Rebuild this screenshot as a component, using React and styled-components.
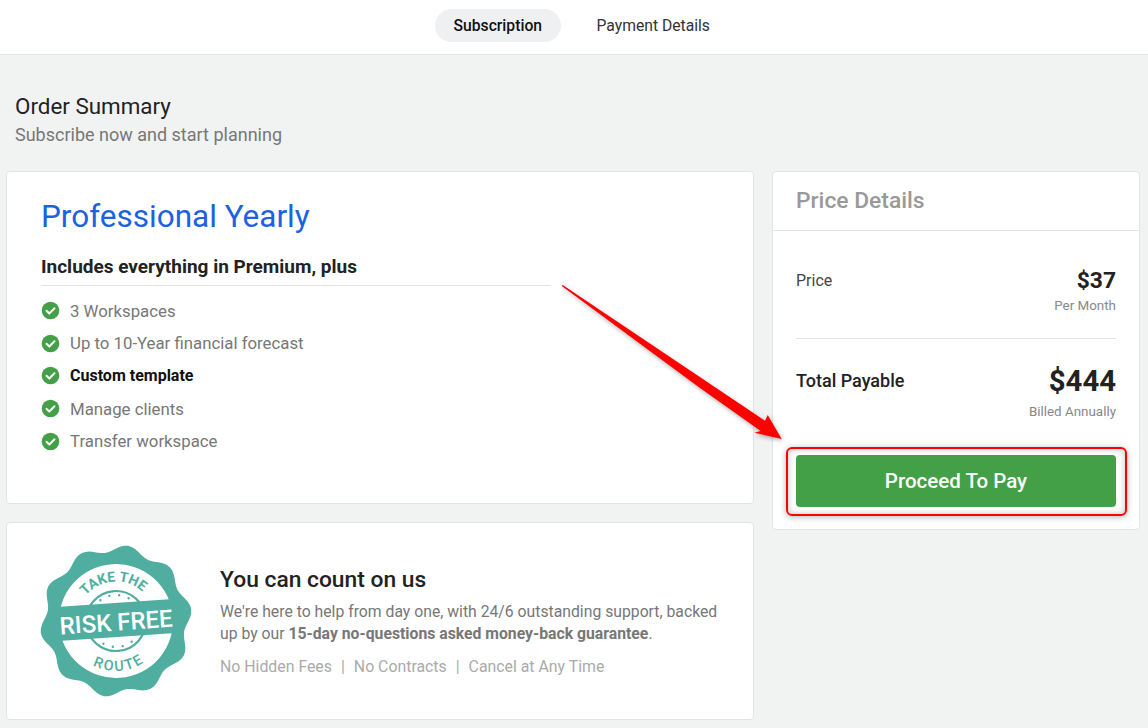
import React from 'react';
import styled, { createGlobalStyle } from 'styled-components';

const GlobalStyle = createGlobalStyle`
  html, body {
    margin: 0;
    padding: 0;
    background: #f1f3f2;
    font-family: Roboto, "Liberation Sans", sans-serif;
  }
  * { box-sizing: border-box; }
`;

const Page = styled.div`
  position: relative;
  width: 1148px;
  height: 728px;
  overflow: hidden;
`;

const TopBar = styled.div`
  height: 55px;
  background: #fff;
  border-bottom: 1px solid #e2e3e3;
  display: flex;
  justify-content: center;
  gap: 10px;
  padding: 9px 0 0 23px;
`;

const Tab = styled.div`
  height: 33px;
  padding: 0 ${({ $active }) => ($active ? '18.5px' : '26px')};
  border-radius: 17px;
  background: ${({ $active }) => ($active ? '#eff0f2' : 'transparent')};
  color: ${({ $active }) => ($active ? '#111' : '#333')};
  font-size: 15.7px;
  font-weight: ${({ $active }) => ($active ? 500 : 400)};
  line-height: 33px;
`;

const Heading = styled.div`
  padding: 37px 0 0 15px;
  height: 116px;
`;

const Title = styled.div`
  font-size: 22.4px;
  line-height: 28px;
  color: #222;
`;

const Subtitle = styled.div`
  margin-top: 1px;
  font-size: 18px;
  line-height: 28px;
  color: #777;
`;

const Columns = styled.div`
  display: flex;
  gap: 18px;
  padding: 0 8px 0 6px;
  align-items: flex-start;
`;

const LeftColumn = styled.div`
  width: 748px;
  display: flex;
  flex-direction: column;
  gap: 18px;
`;

const Card = styled.div`
  background: #fff;
  border: 1px solid #e2e3e3;
  border-radius: 4px;
`;

const PlanCard = styled(Card)`
  height: 333px;
  padding: 25px 34px;
`;

const PlanName = styled.div`
  font-size: 31.5px;
  line-height: 40px;
  color: #1a62e2;
`;

const PlanLead = styled.div`
  width: 510px;
  margin-top: 18px;
  padding-bottom: 7px;
  border-bottom: 1px solid #e2e3e3;
  font-size: 19px;
  line-height: 23px;
  font-weight: 700;
  color: #222;
`;

const Features = styled.ul`
  list-style: none;
  margin: 8.625px 0 0;
  padding: 0;
`;

const Feature = styled.li`
  height: 32.55px;
  display: flex;
  align-items: center;
  gap: 10px;
  color: ${({ $strong }) => ($strong ? '#111' : '#777')};
  font-weight: ${({ $strong }) => ($strong ? 700 : 400)};
  font-size: ${({ $strong }) => ($strong ? '16px' : '16.8px')};
`;

const RiskCard = styled(Card)`
  height: 198px;
  display: flex;
  align-items: center;
  padding: 0 0 0 33px;
  gap: 28px;
`;

const RiskBody = styled.div`
  margin-top: 2px;
`;

const RiskTitle = styled.div`
  font-size: 22.8px;
  line-height: 28px;
  font-weight: 500;
  color: #222;
`;

const RiskText = styled.div`
  margin-top: 7px;
  font-size: 15.75px;
  line-height: 22px;
  color: #777;
  b { font-weight: 700; }
`;

const RiskPerks = styled.div`
  margin-top: 11px;
  display: flex;
  gap: 9px;
  font-size: 15.85px;
  line-height: 22px;
  color: #aaa;
`;

const PriceCard = styled(Card)`
  width: 368px;
  height: 359px;
`;

const PriceHeader = styled.div`
  height: 59px;
  padding-left: 23px;
  border-bottom: 1px solid #e2e3e3;
  font-size: 22.8px;
  font-weight: 500;
  line-height: 58px;
  color: #999;
`;

const PriceBody = styled.div`
  padding: 0 23px;
`;

const PriceRow = styled.div`
  display: flex;
  justify-content: space-between;
  padding-top: ${({ $total }) => ($total ? '23px' : '35px')};
  height: ${({ $total }) => ($total ? '116px' : '108px')};
  border-bottom: ${({ $total }) => ($total ? 'none' : '1px solid #e2e3e3')};
`;

const PriceLabel = styled.div`
  font-size: ${({ $total }) => ($total ? '18px' : '16px')};
  font-weight: ${({ $total }) => ($total ? 500 : 400)};
  color: ${({ $total }) => ($total ? '#222' : '#444')};
  line-height: 22px;
  padding-top: ${({ $total }) => ($total ? '8px' : '4px')};
`;

const PriceValue = styled.div`
  text-align: right;
`;

const Amount = styled.div`
  font-size: ${({ $total }) => ($total ? '29.3px' : '22.8px')};
  line-height: ${({ $total }) => ($total ? '38px' : '30px')};
  font-weight: 700;
  color: #222;
`;

const Note = styled.div`
  margin-top: ${({ $total }) => ($total ? '2.5px' : '0.5px')};
  font-size: 13.4px;
  line-height: 18px;
  color: #888;
`;

const PayButton = styled.div`
  height: 52px;
  background: #43a047;
  border-radius: 4px;
  color: #fff;
  font-size: 20.5px;
  font-weight: 500;
  line-height: 52px;
  text-align: center;
`;

const PayHighlight = styled.div`
  position: absolute;
  left: 786px;
  top: 447px;
  width: 341px;
  height: 69px;
  border: 2px solid #f00;
  border-radius: 6px;
  box-shadow: 0 1px 6px rgba(0, 0, 0, 0.3), inset 0 0 6px rgba(0, 0, 0, 0.25);
  pointer-events: none;
`;

const ArrowOverlay = styled.svg`
  position: absolute;
  left: 550px;
  top: 275px;
  filter: drop-shadow(1px 2px 2px rgba(0, 0, 0, 0.3));
`;

const Check = () => (
  <svg width="19" height="19" viewBox="0 0 19 19">
    <circle cx="9.5" cy="9.5" r="8.8" fill="#43a047" />
    <path d="M5.5 9.8l2.8 2.7 5.2-5.2" fill="none" stroke="#fff" strokeWidth="2" strokeLinecap="round" strokeLinejoin="round" />
  </svg>
);

const TEAL = '#50aea0';

// wavy seal edge
const sealPath = (() => {
  const pts = [];
  for (let i = 0; i < 360; i += 3) {
    const a = (i * Math.PI) / 180;
    const r = 72.5 + 3.6 * Math.cos(10 * (a + 0.157));
    pts.push(`${(76 + r * Math.cos(a)).toFixed(1)} ${(76 + r * Math.sin(a)).toFixed(1)}`);
  }
  return `M${pts.join('L')}Z`;
})();

const starAngles = [-33, -11, 11, 33];

const SealStars = ({ flip }) => (
  <g fill={TEAL}>
    {starAngles.map((deg) => {
      const a = (deg * Math.PI) / 180;
      const y = 26 * Math.cos(a);
      return <circle key={deg} cx={76 + 26 * Math.sin(a)} cy={flip ? 76 + y : 76 - y} r="1.2" />;
    })}
  </g>
);

const Seal = () => (
  <svg width="152" height="152" viewBox="0 0 152 152">
    <defs>
      <path id="sealTop" d="M36.5 76a39.5 39.5 0 0 1 79 0" />
      <path id="sealBottom" d="M26 76a50 50 0 0 0 100 0" />
    </defs>
    <path d={sealPath} fill={TEAL} />
    <g transform="rotate(-4 76 76)">
      <circle cx="76" cy="76" r="57" fill="#fff" />
      <circle cx="76" cy="76" r="30" fill="none" stroke={TEAL} strokeWidth="2.2" />
      <SealStars />
      <SealStars flip />
      <text fontFamily="Roboto, sans-serif" fontSize="14" fontWeight="700" fill={TEAL}>
        <textPath href="#sealTop" startOffset="50%" textAnchor="middle">TAKE THE</textPath>
      </text>
      <text fontFamily="Roboto, sans-serif" fontSize="14.5" fontWeight="500" fill={TEAL} letterSpacing="2">
        <textPath href="#sealBottom" startOffset="50%" textAnchor="middle">ROUTE</textPath>
      </text>
      <rect x="14" y="58" width="124" height="34" fill={TEAL} />
      <text x="76" y="85.5" textAnchor="middle" fontFamily="Roboto, sans-serif" fontSize="24" fontWeight="500" fill="#fff">RISK FREE</text>
    </g>
  </svg>
);

const features = [
  { label: '3 Workspaces' },
  { label: 'Up to 10-Year financial forecast' },
  { label: 'Custom template', strong: true },
  { label: 'Manage clients' },
  { label: 'Transfer workspace' },
];

const App = () => (
  <Page>
    <GlobalStyle />
    <TopBar>
      <Tab $active>Subscription</Tab>
      <Tab>Payment Details</Tab>
    </TopBar>
    <Heading>
      <Title>Order Summary</Title>
      <Subtitle>Subscribe now and start planning</Subtitle>
    </Heading>
    <Columns>
      <LeftColumn>
        <PlanCard>
          <PlanName>Professional Yearly</PlanName>
          <PlanLead>Includes everything in Premium, plus</PlanLead>
          <Features>
            {features.map((f) => (
              <Feature key={f.label} $strong={f.strong}>
                <Check />
                {f.label}
              </Feature>
            ))}
          </Features>
        </PlanCard>
        <RiskCard>
          <Seal />
          <RiskBody>
            <RiskTitle>You can count on us</RiskTitle>
            <RiskText>
              We're here to help from day one, with 24/6 outstanding support, backed
              <br />
              up by our <b>15-day no-questions asked money-back guarantee</b>.
            </RiskText>
            <RiskPerks>
              <span>No Hidden Fees</span>
              <span>|</span>
              <span>No Contracts</span>
              <span>|</span>
              <span>Cancel at Any Time</span>
            </RiskPerks>
          </RiskBody>
        </RiskCard>
      </LeftColumn>
      <PriceCard>
        <PriceHeader>Price Details</PriceHeader>
        <PriceBody>
          <PriceRow>
            <PriceLabel>Price</PriceLabel>
            <PriceValue>
              <Amount>$37</Amount>
              <Note>Per Month</Note>
            </PriceValue>
          </PriceRow>
          <PriceRow $total>
            <PriceLabel $total>Total Payable</PriceLabel>
            <PriceValue>
              <Amount $total>$444</Amount>
              <Note $total>Billed Annually</Note>
            </PriceValue>
          </PriceRow>
          <PayButton>Proceed To Pay</PayButton>
        </PriceBody>
      </PriceCard>
    </Columns>
    <PayHighlight />
    <ArrowOverlay width="240" height="175" viewBox="0 0 240 175">
      <path d="M11.7 11L12.7 10L215 145.7L217.7 140L231.7 164L204.3 157.7L210.7 156L150 113Z" fill="#f00" />
    </ArrowOverlay>
  </Page>
);

export default App;
